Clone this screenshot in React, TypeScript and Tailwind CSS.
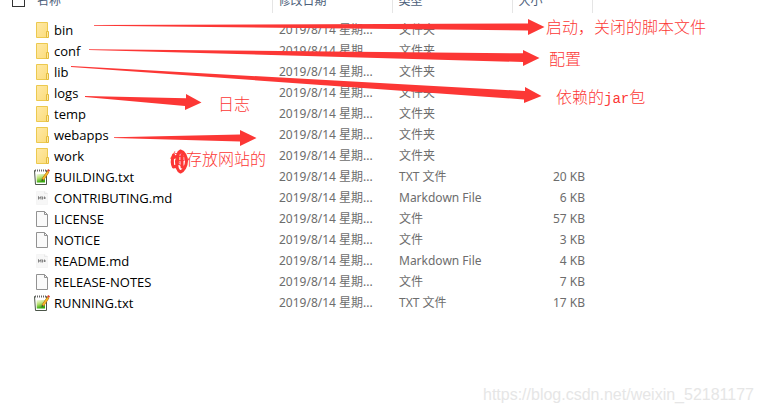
import React, { useState } from "react";

type FileKind = "folder" | "text" | "markdown" | "file";

interface FileEntry {
  name: string;
  kind: FileKind;
  size?: string;
}

const files: FileEntry[] = [
  { name: "bin", kind: "folder" },
  { name: "conf", kind: "folder" },
  { name: "lib", kind: "folder" },
  { name: "logs", kind: "folder" },
  { name: "temp", kind: "folder" },
  { name: "webapps", kind: "folder" },
  { name: "work", kind: "folder" },
  { name: "BUILDING.txt", kind: "text", size: "20 KB" },
  { name: "CONTRIBUTING.md", kind: "markdown", size: "6 KB" },
  { name: "LICENSE", kind: "file", size: "57 KB" },
  { name: "NOTICE", kind: "file", size: "3 KB" },
  { name: "README.md", kind: "markdown", size: "4 KB" },
  { name: "RELEASE-NOTES", kind: "file", size: "7 KB" },
  { name: "RUNNING.txt", kind: "text", size: "17 KB" },
];

const typeNames: Record<FileKind, string> = {
  folder: "文件夹",
  text: "TXT 文件",
  markdown: "Markdown File",
  file: "文件",
};

const FileIcon: React.FC<{ kind: FileKind }> = ({ kind }) => {
  if (kind === "folder") {
    return (
      <svg width="16" height="16" viewBox="0 0 16 16" aria-hidden="true">
        <defs>
          <linearGradient id="folder" x1="0" y1="0" x2="1" y2="1">
            <stop offset="0" stopColor="#ffe9a6" />
            <stop offset="1" stopColor="#fbdc7c" />
          </linearGradient>
        </defs>
        <path d="M2.5.5h11v15h-11z" fill="url(#folder)" stroke="#ecc94f" />
        <path d="M12.5 9.5h2v6h-2z" fill="#ffe9a0" stroke="#e3bb3c" />
      </svg>
    );
  }
  if (kind === "text") {
    return (
      <svg width="16" height="16" viewBox="0 0 16 16" aria-hidden="true">
        <defs>
          <linearGradient id="note" x1="0" y1="0" x2="0.3" y2="1">
            <stop offset="0" stopColor="#f4fbe8" />
            <stop offset="0.5" stopColor="#b8e070" />
            <stop offset="1" stopColor="#35a80d" />
          </linearGradient>
        </defs>
        <path d="M.5 1.5h12v14H1.5z" fill="#fff" stroke="#4b5548" />
        <path d="M2.5 5h8.500v8.500H2.800z" fill="url(#note)" />
        <path d="M1 1.500h11" stroke="#fff" strokeWidth="2" />
        <path d="M1 1.500h11" stroke="#666" strokeWidth="2" strokeDasharray="1 1" />
        <path d="M14.200 2.500 8.800 10.500" stroke="#a86a13" strokeWidth="2.600" />
        <path d="M14 2.800 9 10.200" stroke="#f9b92b" strokeWidth="1.700" />
        <path d="M13 1.500 14.200 0 16 1.300l-1 1.800z" fill="#d8432b" />
        <path d="m7.600 12.200.3-2.200 1.600 1z" fill="#443b2d" />
      </svg>
    );
  }
  if (kind === "markdown") {
    return (
      <svg width="16" height="16" viewBox="0 0 16 16" aria-hidden="true">
        <path d="M2.5 1.5h8l3 2v11h-11z" fill="#f7f7f7" stroke="#f5f5f5" />
        <path d="M10.5 1.5v2h3" fill="none" stroke="#e9e9e9" />
        <path
          d="M4.500 9.500v-3l1.300 2 1.200-2v3M8.500 6.500v3M10.500 6.500v2.500M9.500 8h2.500"
          fill="none"
          stroke="#777"
          strokeWidth="0.9"
        />
      </svg>
    );
  }
  return (
    <svg width="16" height="16" viewBox="0 0 16 16" aria-hidden="true">
      <path d="M2.5.5h8l3 3v12h-11z" fill="#fafafa" stroke="#929292" />
      <path d="M10.5.5v3h3" fill="none" stroke="#929292" />
    </svg>
  );
};

// Red arrows from a folder to its note
const Arrows: React.FC = () => (
  <svg
    className="absolute top-0 left-0 pointer-events-none"
    width="764"
    height="413"
    viewBox="0 0 764 413"
    fill="#fc3735"
    aria-hidden="true"
  >
    <path d="M94 25 528 23.5V19l16.500 8L528 35v-4.500L94 25.800z" />
    <path d="M89 49.200 523 53.300V50l16.500 8L523 66v-4L89 50z" />
    <path d="M71 66 525 91v-4l16.500 9L524 103v-3.500L71 67z" />
    <path d="m85 96 101 2.300V94l15.500 8.500-16.500 7.500v-4L85 97z" />
    <path d="m114 137.200 126-2.700V130l16.500 8-16.500 8v-4.500L114 138z" />
    {/* scribble over the first character */}
    <path
      d="M173.500 155c-1.500 4-1.500 9 0 12 3 0 4-3 4-6 0-5 0-9 3-10 4 1 6 6 6 10 0 5-3 10-6 11-3-1-4-6-4-11M173 158l4-2M182 155v12"
      fill="none"
      stroke="#fc3735"
      strokeWidth="3"
      strokeLinecap="round"
      strokeLinejoin="round"
    />
  </svg>
);

const App: React.FC = () => {
  const [allSelected, setAllSelected] = useState(false);

  return (
    <main className="relative min-h-screen overflow-hidden bg-white font-['Noto_Sans','Noto_Sans_CJK_SC',sans-serif] text-[12px] leading-5">
      <table className="-mt-3 w-full table-fixed border-collapse text-left text-[#6d6d6d]">
        <colgroup>
          <col className="w-[272px]" />
          <col className="w-[120px]" />
          <col className="w-[120px]" />
          <col className="w-[80px]" />
          <col />
        </colgroup>
        <thead>
          <tr className="h-[25px] text-[#4c607a]">
            <th className="border-r border-[#e5e5e5] p-0 font-normal">
              <div className="flex items-center gap-3 pl-3">
                <input
                  type="checkbox"
                  aria-label="全选"
                  checked={allSelected}
                  onChange={(e) => setAllSelected(e.target.checked)}
                  className="size-[13px] appearance-none border border-[#333] bg-white checked:bg-[#333]"
                />
                <span>名称</span>
              </div>
            </th>
            <th className="border-r border-[#e5e5e5] py-0 pr-0 pl-1.5 font-normal">修改日期</th>
            <th className="border-r border-[#e5e5e5] py-0 pr-0 pl-1.5 font-normal">类型</th>
            <th className="border-r border-[#e5e5e5] py-0 pr-0 pl-1.5 font-normal">大小</th>
            <th className="p-0" />
          </tr>
        </thead>
        <tbody>
          <tr className="h-1.5">
            <td colSpan={5} className="p-0" />
          </tr>
          {files.map((file) => (
            <tr key={file.name} className="h-[21px]">
              <td className="p-0">
                <div className="flex items-center gap-1 pl-[34px] text-black">
                  <FileIcon kind={file.kind} />
                  <span className="font-['Open_Sans',sans-serif] text-[13px]">{file.name}</span>
                </div>
              </td>
              <td className="py-0 pr-0 pl-[7px] whitespace-nowrap">2019/8/14 星期...</td>
              <td className="py-0 pr-0 pl-[7px] whitespace-nowrap">{typeNames[file.kind]}</td>
              <td className="py-0 pr-[7px] pl-0 text-right whitespace-nowrap">{file.size}</td>
              <td className="p-0" />
            </tr>
          ))}
        </tbody>
      </table>

      {/* Notes */}
      <div className="font-['Noto_Sans_CJK_SC',sans-serif] text-[16px] font-light leading-5 whitespace-nowrap text-[#fc3735]">
        <p className="absolute top-4 left-[546px]">启动，关闭的脚本文件</p>
        <p className="absolute top-12 left-[549px]">配置</p>
        <p className="absolute top-[86px] left-[556px]">
          依赖的<span className="font-['Liberation_Mono',monospace] text-[14px]">jar</span>包
        </p>
        <p className="absolute top-[93px] left-[218px]">日志</p>
        <p className="absolute top-[148px] left-[170px]">使存放网站的</p>
      </div>
      <Arrows />

      <a
        href="https://blog.csdn.net/weixin_52181177"
        className="absolute right-2.5 bottom-2 font-['Liberation_Sans',sans-serif] text-[16px] leading-5 text-[#e6e6e6]"
      >
        https://blog.csdn.net/weixin_52181177
      </a>
    </main>
  );
};

export default App;
